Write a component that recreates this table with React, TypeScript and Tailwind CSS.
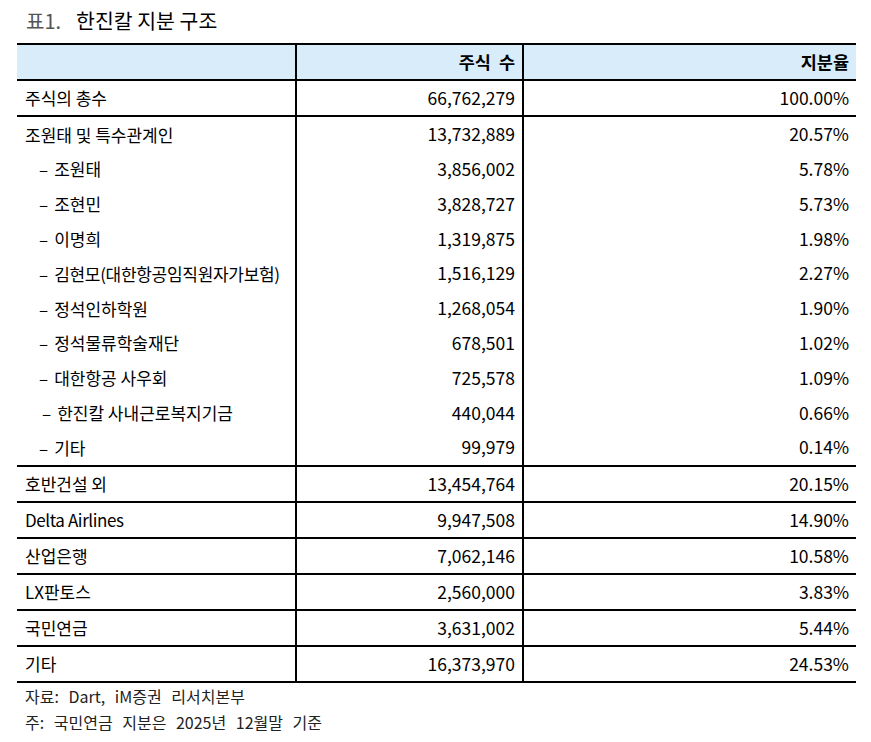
import React from 'react';

type Row = { name: string; shares: string; ratio: string; sub?: boolean; cls?: string; dash?: string };

const summary: Row = { name: '주식의 총수', shares: '66,762,279', ratio: '100.00%' };

const group: Row[] = [
  { name: '조원태 및 특수관계인', shares: '13,732,889', ratio: '20.57%' },
  { name: '조원태', shares: '3,856,002', ratio: '5.78%', sub: true },
  { name: '조현민', shares: '3,828,727', ratio: '5.73%', sub: true },
  { name: '이명희', shares: '1,319,875', ratio: '1.98%', sub: true },
  { name: '김현모(대한항공임직원자가보험)', shares: '1,516,129', ratio: '2.27%', sub: true, cls: 'tracking-[-0.3px]' },
  { name: '정석인하학원', shares: '1,268,054', ratio: '1.90%', sub: true },
  { name: '정석물류학술재단', shares: '678,501', ratio: '1.02%', sub: true },
  { name: '대한항공 사우회', shares: '725,578', ratio: '1.09%', sub: true },
  { name: '한진칼 사내근로복지기금', shares: '440,044', ratio: '0.66%', sub: true, dash: 'ml-[17px]' },
  { name: '기타', shares: '99,979', ratio: '0.14%', sub: true },
];

const others: Row[] = [
  { name: '호반건설 외', shares: '13,454,764', ratio: '20.15%' },
  { name: 'Delta Airlines', shares: '9,947,508', ratio: '14.90%', cls: 'tracking-[-0.4px]' },
  { name: '산업은행', shares: '7,062,146', ratio: '10.58%' },
  { name: 'LX판토스', shares: '2,560,000', ratio: '3.83%' },
  { name: '국민연금', shares: '3,631,002', ratio: '5.44%' },
  { name: '기타', shares: '16,373,970', ratio: '24.53%' },
];

const font = { fontFamily: '"Noto Sans CJK KR", "Noto Sans", sans-serif' };

function Cells({ row, height }: { row: Row; height: string }) {
  return (
    <div className={`grid grid-cols-[280px_227px_332px] ${height}`}>
      <div className="flex items-center border-r-2 border-black pl-2 text-[17px]">
        {row.sub && <span className={`mr-[6px] ${row.dash ?? 'ml-[14px]'}`}>–</span>}
        <span className={row.cls ?? ''}>{row.name}</span>
      </div>
      <div className="flex items-center justify-end border-r-2 border-black pr-[7px]">
        {row.shares}
      </div>
      <div className="flex items-center justify-end pr-[7px]">{row.ratio}</div>
    </div>
  );
}

export default function App() {
  return (
    <div className="h-[742px] w-[871px] bg-white text-[17.5px] text-black" style={font}>
      <div className="flex h-[43px] items-center gap-[15px] pl-[26px] pb-[2px]">
        <span className="text-[20px] text-[#555]">표1.</span>
        <span className="text-[20.5px] text-black">한진칼 지분 구조</span>
      </div>

      <div className="ml-[17px] w-[839px] border-t-2 border-black">
        {/* header */}
        <div className="grid h-[36px] grid-cols-[280px_227px_332px] border-b-2 border-black bg-[#d9ecf9] font-semibold">
          <div className="border-r-2 border-black" />
          <div className="flex items-center justify-end border-r-2 border-black pr-[7px]">
            주식&nbsp;&nbsp;수
          </div>
          <div className="flex items-center justify-end pr-[7px]">지분율</div>
        </div>

        <div className="border-b-2 border-black">
          <Cells row={summary} height="h-[34px]" />
        </div>

        <div className="border-b-2 border-black">
          {group.map((r, i) => (
            <Cells key={i} row={r} height="h-[34.8px]" />
          ))}
        </div>

        {others.map((r, i) => (
          <div key={i} className="border-b-2 border-black">
            <Cells row={r} height="h-[34px]" />
          </div>
        ))}
      </div>

      <div className="pl-[25px] text-[16px] leading-[26px] text-[#222] [word-spacing:6px]">
        <p>자료: Dart, iM증권 리서치본부</p>
        <p>주: 국민연금 지분은 2025년 12월말 기준</p>
      </div>
    </div>
  );
}
